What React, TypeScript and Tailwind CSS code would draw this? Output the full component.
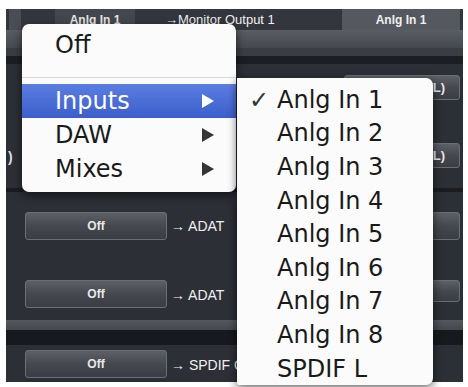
import React from 'react';

const font = { fontFamily: '"DejaVu Sans", "Liberation Sans", sans-serif' };
const sans = { fontFamily: '"Liberation Sans", Arial, sans-serif' };

function Tri({ white }: { white?: boolean }) {
  return (
    <svg width="12" height="14" viewBox="0 0 12 14">
      <polygon points="0,0 12,7 0,14" fill={white ? '#ffffff' : '#353535'} />
    </svg>
  );
}

function DarkButton({ label, className }: { label: string; className: string }) {
  return (
    <div
      className={`flex items-center rounded-[3px] border border-[#6b6e74] bg-gradient-to-b from-[#5d6066] via-[#45484e] to-[#3a3d43] text-[12px] font-bold text-[#e8e8e8] ${className}`}
      style={sans}
    >
      {label}
    </div>
  );
}

function RightButton({ className, label }: { className: string; label?: string }) {
  return (
    <div
      className={`mr-[3px] flex w-[116px] items-center justify-end rounded-[3px] border border-[#6b6e74] bg-gradient-to-b from-[#5d6066] via-[#45484e] to-[#3a3d43] pr-[14px] text-[13px] font-bold text-[#e8e8e8] ${className}`}
      style={sans}
    >
      {label}
    </div>
  );
}

export default function App() {
  const subItems = ['Anlg In 1', 'Anlg In 2', 'Anlg In 3', 'Anlg In 4', 'Anlg In 5', 'Anlg In 6', 'Anlg In 7', 'Anlg In 8', 'SPDIF L'];

  return (
    <div className="relative h-[387px] w-[468px] overflow-hidden bg-white">
      {/* background mixer panel */}
      <div className="ml-[6px] mt-[9px] flex h-[373px] w-[457px] flex-col bg-[#2c2f35]">
        {/* top row */}
        <div className="flex h-[21px] items-center bg-[#33363c]">
          <div className="ml-[3px] h-full w-[12px] bg-[#4a4d53]" />
          <div className="ml-[34px] flex h-full w-[80px] items-center justify-center bg-[#44474d] text-[12px] font-bold text-[#e6e6e6]" style={sans}>
            Anlg In 1
          </div>
          <span className="ml-[30px] text-[13px] text-[#f0f0f0]" style={sans}>→Monitor Output 1</span>
          <div className="flex-1" />
          <div className="mr-[3px] flex h-full w-[118px] items-center justify-center bg-[#55585e] text-[12px] font-bold text-[#f0f0f0]" style={sans}>
            Anlg In 1
          </div>
        </div>
        <div className="h-[18px] bg-gradient-to-b from-[#5a5d63] to-[#45484e]" />
        <div className="h-[8px] bg-[#3a3d43]" />
        <div className="h-[8px] bg-[#1c1e22]" />
        <div className="flex h-[70px] items-start pt-[11px]">
          <div className="flex-1" />
          <RightButton className="h-[25px]" label="SPDIF (L)" />
        </div>
        <div className="flex h-[54px] items-start pt-[9px]">
          <span className="ml-[2px] mt-[4px] text-[14px] font-bold text-[#ddd]" style={sans}>)</span>
          <div className="flex-1" />
          <RightButton className="h-[25px]" label="SPDIF (L)" />
        </div>
        <div className="h-[4px] bg-[#1a1c20]" />
        <div className="flex h-[68px] items-center">
          <DarkButton label="Off" className="ml-[19px] h-[28px] w-[142px] justify-center" />
          <span className="ml-[4px] text-[14px] text-[#f0f0f0]" style={sans}>→ ADAT</span>
          <div className="flex-1" />
          <RightButton className="h-[28px]" />
        </div>
        <div className="flex h-[60px] items-start pt-[20px]">
          <DarkButton label="Off" className="ml-[19px] h-[28px] w-[142px] justify-center" />
          <span className="ml-[4px] mt-[5px] text-[14px] text-[#f0f0f0]" style={sans}>→ ADAT</span>
          <div className="flex-1" />
          <RightButton className="h-[22px]" />
        </div>
        <div className="h-[10px] bg-gradient-to-b from-[#55585e] to-[#44474c]" />
        <div className="h-[15px] bg-[#18191d]" />
        <div className="flex h-[37px] items-start pt-[5px]">
          <DarkButton label="Off" className="ml-[19px] h-[28px] w-[142px] justify-center" />
          <span className="ml-[4px] mt-[5px] text-[14px] text-[#f0f0f0]" style={sans}>→ SPDIF Out</span>
        </div>
      </div>

      {/* popup menu */}
      <div
        className="absolute left-[22px] top-[24px] flex w-[214px] flex-col rounded-[7px] bg-[#fbfbfb] pb-[6px] pt-[4px] text-[24px] text-[#1a1a1a] shadow-[0_3px_10px_rgba(0,0,0,0.6)]"
        style={font}
      >
        <div className="flex h-[34px] items-center pl-[33px]">Off</div>
        <div className="mb-[6px] mt-[15px] h-[1px] bg-[#d8d8d8]" />
        <div className="flex h-[34px] items-center justify-between bg-gradient-to-b from-[#5b7ee2] to-[#3c5ecb] pl-[33px] pr-[22px] text-white">
          <span>Inputs</span>
          <Tri white />
        </div>
        <div className="flex h-[34px] items-center justify-between pl-[33px] pr-[22px]">
          <span>DAW</span>
          <Tri />
        </div>
        <div className="flex h-[34px] items-center justify-between pl-[33px] pr-[22px]">
          <span>Mixes</span>
          <Tri />
        </div>
      </div>

      {/* submenu */}
      <div
        className="absolute left-[237px] top-[78px] flex w-[196px] flex-col rounded-r-[7px] rounded-bl-[2px] bg-[#fbfbfb] pt-[5px] text-[24px] text-[#1a1a1a] shadow-[0_3px_10px_rgba(0,0,0,0.6)]"
        style={font}
      >
        {subItems.map((item, i) => (
          <div key={item} className="flex h-[33.6px] items-center">
            <span className="w-[40px] pl-[12px] text-[#333]">{i === 0 ? '✓' : ''}</span>
            <span>{item}</span>
          </div>
        ))}
      </div>
    </div>
  );
}
